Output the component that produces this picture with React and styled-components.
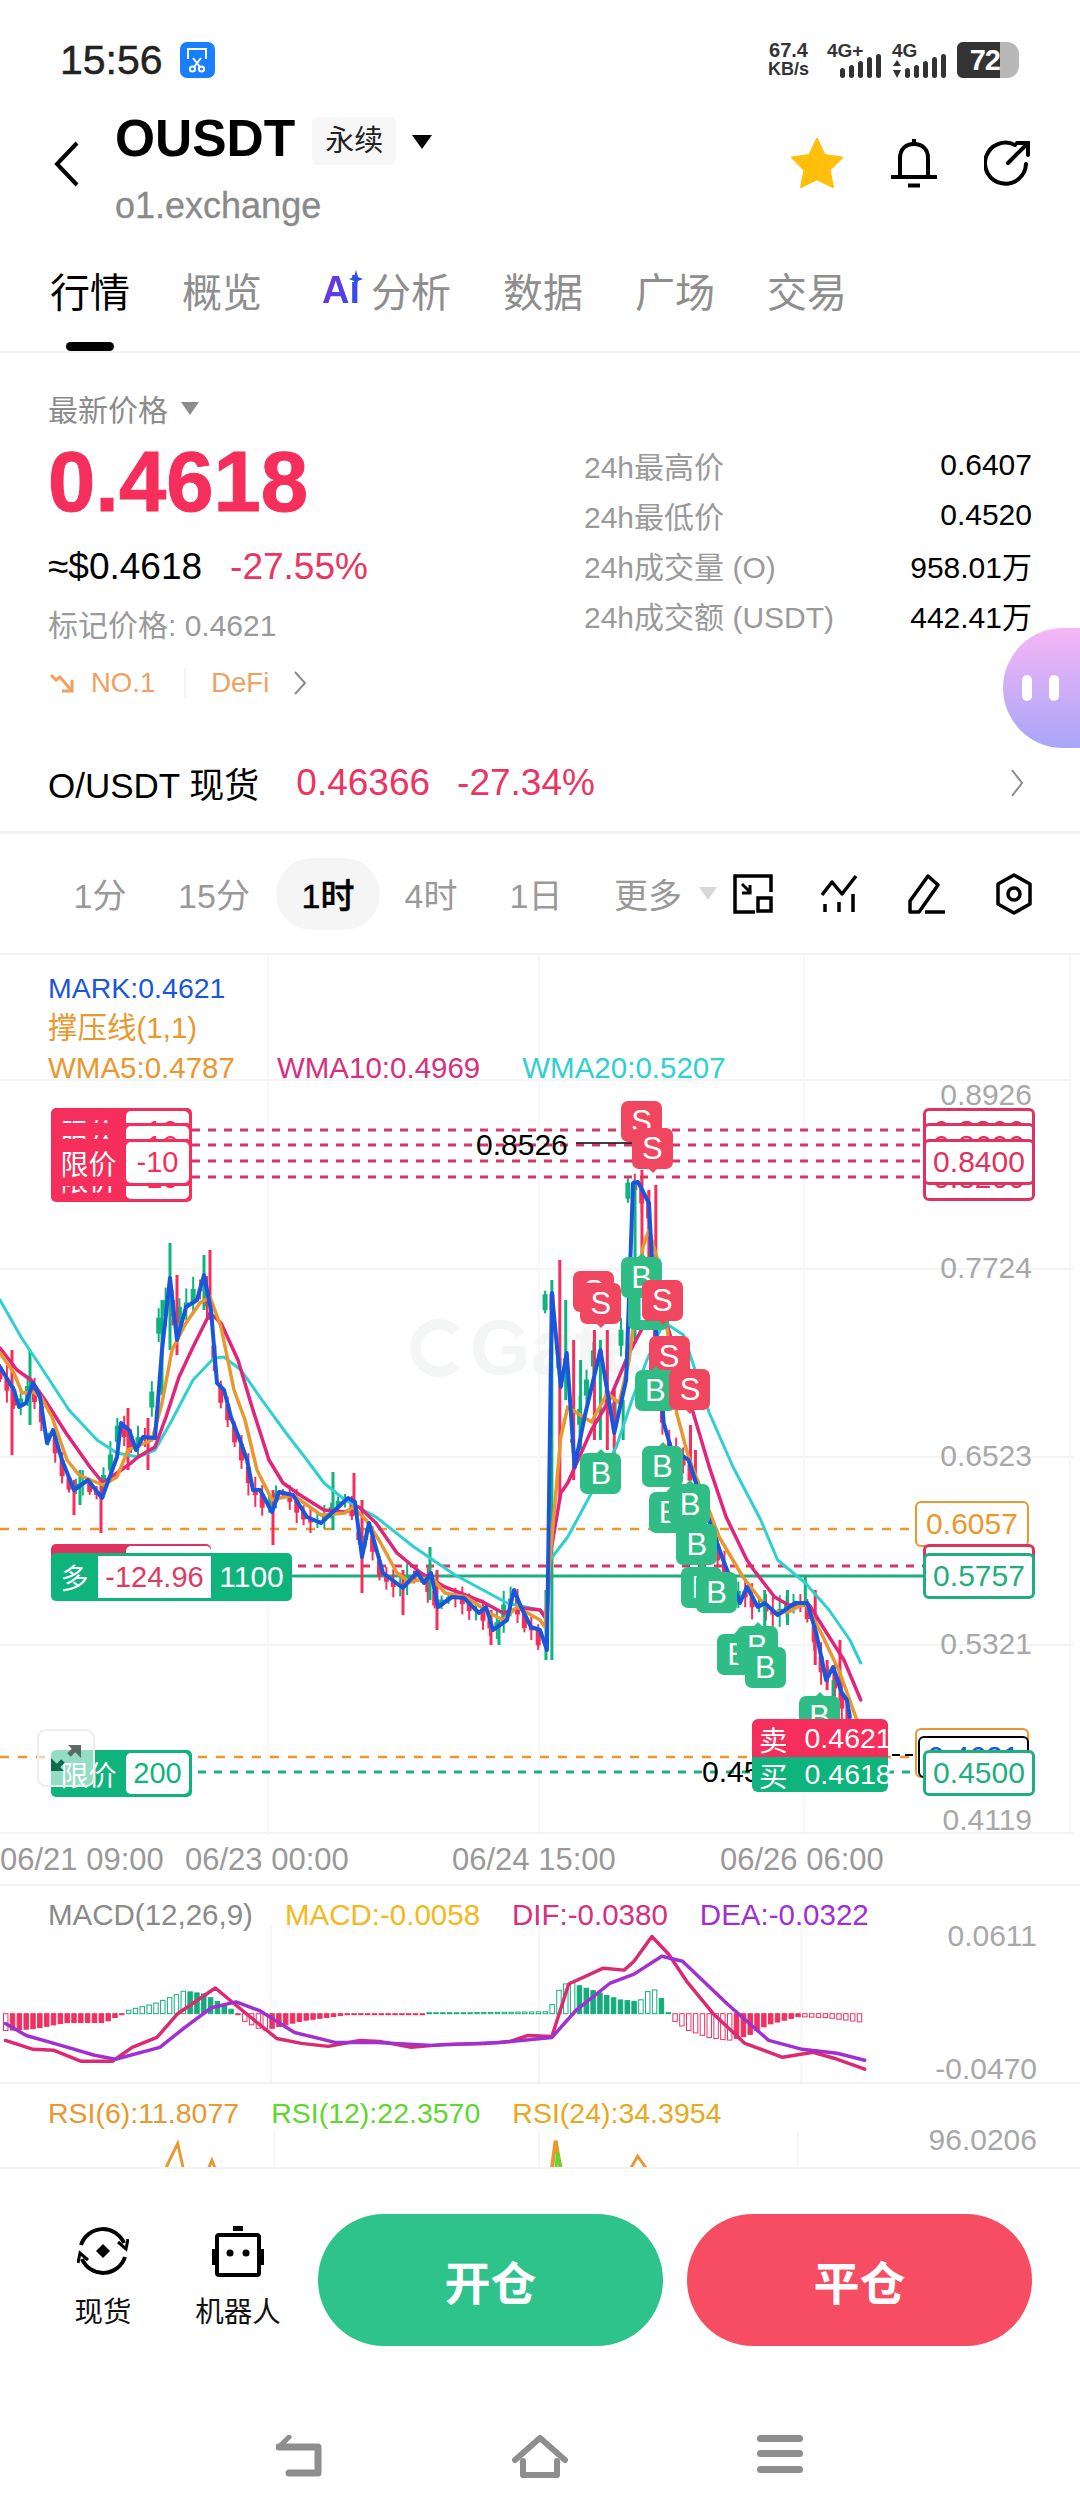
import React from "react";
import styled, { createGlobalStyle } from "styled-components";

const GlobalStyle = createGlobalStyle`
  html, body {
    margin: 0;
    padding: 0;
    background: #fff;
  }
  body {
    width: 1080px;
    height: 2520px;
    overflow: hidden;
    font-family: "Liberation Sans", "Noto Sans CJK SC", sans-serif;
  }
`;

const RED = "#f52e5b";
const GREEN = "#0fb47c";
const ORANGE = "#e8982f";
const PINK = "#d6307f";
const TEAL = "#2ed0d0";
const BLUE = "#1a56db";

// traced from the chart, page coordinates
const squeeze = (x) => (x <= 540 ? x : 540 + (x - 540) * 0.99);
const tidy = (pts) => pts.map(([x, y]) => [squeeze(x), y]);

const blue = tidy([[0,1367],[14,1390],[19,1407],[26,1403],[33,1383],[40,1397],[47,1443],[53,1430],[62,1460],[74,1490],[88,1480],[102,1498],[117,1457],[121,1423],[129,1430],[136,1450],[143,1437],[155,1438],[162,1350],[170,1278],[177,1340],[186,1307],[197,1300],[204,1275],[211,1310],[217,1383],[224,1390],[231,1417],[241,1443],[247,1460],[253,1490],[260,1490],[272,1512],[279,1492],[293,1495],[307,1517],[321,1523],[348,1498],[355,1502],[362,1557],[369,1523],[383,1573],[403,1588],[417,1572],[424,1583],[431,1573],[438,1607],[452,1597],[464,1598],[479,1613],[486,1607],[493,1630],[507,1620],[514,1590],[521,1607],[531,1627],[540,1630],[547,1650],[552,1293],[561,1387],[567,1353],[575,1467],[585,1417],[601,1350],[615,1433],[627,1380],[634,1183],[639,1182],[650,1203],[657,1327],[665,1423],[672,1447],[690,1460],[700,1490],[725,1560],[742,1603],[749,1587],[760,1607],[767,1603],[780,1615],[798,1603],[810,1603],[819,1633],[829,1680],[836,1667],[845,1693],[850,1700],[853,1717]]);
const orange = tidy([[0,1353],[14,1373],[22,1393],[33,1392],[41,1397],[52,1417],[67,1460],[79,1475],[103,1485],[117,1477],[128,1450],[152,1440],[162,1403],[172,1350],[186,1323],[200,1303],[210,1297],[221,1327],[234,1390],[245,1420],[257,1470],[272,1500],[293,1495],[321,1515],[345,1513],[353,1507],[366,1520],[379,1540],[397,1573],[410,1582],[431,1577],[445,1593],[466,1597],[490,1613],[503,1620],[517,1607],[540,1620],[545,1627],[550,1560],[561,1437],[568,1407],[592,1422],[608,1393],[620,1403],[630,1360],[644,1247],[650,1230],[658,1257],[669,1333],[678,1413],[690,1457],[704,1493],[721,1537],[745,1577],[763,1600],[777,1612],[791,1612],[808,1603],[826,1637],[843,1673],[860,1720]]);
const pink = tidy([[0,1348],[17,1370],[31,1380],[45,1400],[66,1433],[90,1467],[103,1483],[117,1473],[131,1463],[138,1457],[155,1447],[166,1417],[179,1377],[193,1347],[210,1313],[221,1323],[238,1360],[252,1407],[269,1460],[283,1483],[300,1495],[324,1510],[345,1512],[359,1507],[376,1523],[397,1553],[421,1573],[445,1587],[483,1602],[503,1613],[521,1608],[540,1610],[547,1620],[550,1557],[561,1493],[568,1483],[592,1430],[610,1400],[630,1353],[644,1327],[669,1327],[693,1407],[711,1467],[728,1517],[749,1560],[756,1570],[777,1597],[791,1605],[812,1605],[829,1632],[847,1660],[864,1700]]);
const teal = tidy([[0,1300],[21,1337],[41,1367],[69,1410],[97,1440],[117,1453],[138,1457],[155,1450],[172,1420],[193,1380],[214,1358],[224,1357],[241,1370],[262,1400],[286,1433],[307,1460],[324,1483],[345,1500],[376,1517],[414,1547],[455,1575],[483,1590],[507,1603],[540,1610],[547,1615],[550,1560],[568,1537],[592,1493],[617,1447],[634,1397],[648,1360],[665,1322],[685,1335],[711,1413],[735,1467],[763,1520],[780,1560],[808,1583],[832,1610],[853,1640],[864,1663]]);
const dif = [[0,2040],[28,2049],[49,2050],[76,2061],[108,2061],[128,2047],[153,2037],[174,2013],[212,1987],[236,2007],[274,2038],[299,2043],[326,2046],[358,2040],[378,2041],[410,2047],[444,2044],[486,2043],[510,2041],[528,2035],[552,2036],[569,1983],[604,1967],[625,1969],[635,1960],[653,1935],[670,1953],[688,1980],[715,2013],[747,2043],[785,2057],[816,2052],[837,2058],[868,2069]];
const dea = [[0,2023],[21,2035],[56,2045],[90,2055],[111,2059],[156,2047],[181,2027],[208,2007],[233,2001],[257,2010],[292,2032],[333,2042],[375,2042],[431,2045],[500,2042],[552,2037],[576,2010],[611,1982],[635,1973],[663,1955],[684,1960],[729,2003],[771,2040],[805,2049],[840,2053],[868,2060]];
const macdShape = [[0,17],[30,15],[60,9],[100,9],[112,3],[118,0],[125,-4],[150,-10],[170,-18],[180,-23],[200,-20],[220,-9],[232,-2],[240,7],[260,17],[280,12],[300,7],[345,1],[400,0.6],[470,-1],[550,-2],[555,-20],[570,-34],[580,-28],[600,-21],[620,-14],[640,-12],[650,-24],[660,-24],[665,-6],[670,0],[675,7],[690,17],[710,24],[730,27],[750,22],[770,11],[800,3],[830,4],[868,9]];

// x, wick top, wick bottom, colour
const bigWicks = [[12,1350,1455,RED],[30,1350,1425,GREEN],[128,1408,1470,RED],[148,1418,1470,RED],[74,1480,1515,RED],[80,1470,1505,GREEN],[101,1480,1533,RED],[170,1243,1350,GREEN],[177,1275,1355,RED],[162,1300,1395,GREEN],[204,1255,1310,GREEN],[210,1250,1320,RED],[273,1490,1545,RED],[333,1472,1530,GREEN],[354,1473,1515,RED],[362,1500,1593,RED],[403,1570,1615,RED],[430,1547,1600,GREEN],[437,1570,1630,RED],[491,1610,1645,RED],[499,1620,1645,GREEN],[546,1590,1660,GREEN],[552,1280,1660,GREEN],[560,1260,1500,RED],[566,1300,1400,GREEN],[574,1340,1480,RED],[581,1360,1450,GREEN],[595,1330,1440,RED],[601,1340,1440,GREEN],[608,1330,1450,RED],[615,1390,1460,RED],[624,1400,1440,GREEN],[636,1180,1340,GREEN],[643,1170,1290,RED],[650,1190,1260,RED],[657,1185,1300,RED],[692,1425,1480,RED],[697,1450,1500,RED],[767,1590,1630,GREEN],[790,1590,1625,GREEN],[808,1575,1605,GREEN],[818,1590,1665,RED],[830,1660,1690,RED],[843,1640,1700,RED],[836,1680,1700,GREEN],[850,1700,1720,RED]];

const toPoints = (pts) => pts.map((p) => p.join(",")).join(" ");

const interpolate = (pts, x) => {
  for (let i = 1; i < pts.length; i++) {
    if (x <= pts[i][0]) {
      const [x0, y0] = pts[i - 1];
      const [x1, y1] = pts[i];
      return y0 + ((y1 - y0) * (x - x0)) / (x1 - x0 || 1);
    }
  }
  return pts[pts.length - 1][1];
};

const buildCandles = () => {
  const list = [];
  for (let i = 0; i * 6.9 < 850; i++) {
    const x = i * 6.9;
    const a = interpolate(blue, x);
    const b = interpolate(blue, x + 6.9);
    const seed = Math.abs(Math.sin(i * 12.9898) * 43758.5453) % 1;
    const wick = 3 + seed * 11;
    const top = Math.min(a, b);
    const bottom = Math.max(a, b);
    // the body stays short on the steep legs, the overlay line covers the move
    const body = Math.min(bottom - top + 1, 16);
    list.push({
      x,
      top,
      body,
      high: top - wick,
      low: top + body + wick * 0.9,
      color: b > a ? RED : GREEN,
    });
  }
  return list;
};

const buildMacd = () => {
  const list = [];
  let prev = 0;
  for (let x = 0; x < 868; x += 6.9) {
    const value = interpolate(macdShape, x);
    // bars that are still growing are drawn hollow
    list.push({ x, value, hollow: Math.abs(value) > Math.abs(prev) });
    prev = value;
  }
  return list;
};

const candles = buildCandles();
const macdBars = buildMacd();

const Page = styled.div`
  position: relative;
  width: 1080px;
  height: 2520px;
  overflow: hidden;
  background: #fff;
  color: #000;
`;

/* status bar */
const StatusBar = styled.div`
  display: flex;
  align-items: center;
  justify-content: space-between;
  height: 100px;
  box-sizing: border-box;
  padding: 20px 61px 0 60px;
`;
const StatusLeft = styled.div`
  display: flex;
  align-items: center;
  gap: 17px;
`;
const Clock = styled.span`
  font-size: 41px;
  font-weight: 500;
  color: #222;
  -webkit-text-stroke: 0.5px #222;
`;
const ScissorBadge = styled.div`
  display: flex;
  align-items: center;
  justify-content: center;
  width: 35px;
  height: 36px;
  border-radius: 7px;
  background: #1a7fff;
`;
const StatusRight = styled.div`
  display: flex;
  align-items: center;
  gap: 11px;
`;
const NetSpeed = styled.div`
  display: flex;
  flex-direction: column;
  align-items: center;
  width: 43px;
  margin-right: 6px;
  font-weight: 700;
  color: #333;
`;
const NetValue = styled.span`
  font-size: ${(p) => p.$size}px;
  line-height: 19px;
`;
const NetCell = styled.div`
  position: relative;
  width: 54px;
  height: 36px;
`;
const NetLabel = styled.span`
  position: absolute;
  left: 0;
  top: 0;
  font-size: 19px;
  line-height: 18px;
  font-weight: 700;
  color: #333;
`;
const NetBars = styled.svg`
  position: absolute;
  left: ${(p) => p.$left}px;
  top: 12px;
`;
const Battery = styled.div`
  display: flex;
  align-items: center;
  width: 62px;
  height: 36px;
  border-radius: 6px 12px 12px 6px;
  background: #b8b8b8;
  overflow: hidden;
`;
const BatteryFill = styled.div`
  display: flex;
  align-items: center;
  justify-content: flex-end;
  width: 43px;
  height: 100%;
  box-sizing: border-box;
  background: #333;
  color: #fff;
  font-size: 29px;
  font-weight: 700;
  letter-spacing: -1px;
`;

/* header */
const Header = styled.div`
  display: flex;
  align-items: flex-start;
  height: 160px;
  padding: 0 50px 0 53px;
  box-sizing: border-box;
`;
const BackButton = styled.svg`
  width: 26px;
  height: 46px;
  margin-top: 41px;
  margin-right: 36px;
`;
const TitleColumn = styled.div`
  display: flex;
  flex-direction: column;
  flex: 1;
  padding-top: 8px;
`;
const TitleRow = styled.div`
  display: flex;
  align-items: flex-start;
  height: 60px;
`;
const Symbol = styled.span`
  font-size: 51.5px;
  line-height: 60px;
  font-weight: 700;
`;
const ContractTag = styled.span`
  width: 84px;
  height: 48px;
  margin: 9px 0 0 17px;
  border-radius: 6px;
  background: #f7f7f7;
  color: #222;
  font-size: 29px;
  line-height: 48px;
  text-align: center;
`;
const TitleCaret = styled.span`
  width: 0;
  height: 0;
  margin: 27px 0 0 16px;
  border-left: 10px solid transparent;
  border-right: 10px solid transparent;
  border-top: 14px solid #000;
`;
const Exchange = styled.div`
  margin-top: 16px;
  font-size: 36px;
  line-height: 44px;
  color: #8a8a8a;
  -webkit-text-stroke: 0.3px #8a8a8a;
`;
const HeaderActions = styled.div`
  display: flex;
  align-items: center;
  gap: 47px;
  padding-top: 38px;
`;

/* tabs */
const TabBar = styled.div`
  display: flex;
  align-items: flex-start;
  gap: 52px;
  height: 93px;
  padding: 6px 0 0 50px;
  box-sizing: border-box;
  border-bottom: 2px solid #f2f2f2;
`;
const Tab = styled.div`
  position: relative;
  display: flex;
  align-items: center;
  height: 48px;
  margin-left: ${(p) => (p.$ai ? 8 : 0)}px;
  font-size: 40px;
  color: ${(p) => (p.$active ? "#000" : "#8e8e8e")};

  &::after {
    content: "";
    display: ${(p) => (p.$active ? "block" : "none")};
    position: absolute;
    left: 16px;
    top: 76px;
    width: 48px;
    height: 9px;
    border-radius: 5px;
    background: #000;
  }
`;
const AiMark = styled.span`
  width: 36px;
  font-size: 38px;
  font-weight: 700;
  background: linear-gradient(100deg, #7a2fe0, #2d50ea);
  -webkit-background-clip: text;
  background-clip: text;
  color: transparent;
`;
const AiSpark = styled.svg`
  margin: -22px 8px 0 -9px;
`;

/* price block */
const InfoBlock = styled.div`
  position: relative;
  display: flex;
  justify-content: space-between;
  height: 381px;
  padding: 0 48px;
`;
const InfoLeft = styled.div`
  display: flex;
  flex-direction: column;
  padding-top: 35px;
`;
const PriceLabel = styled.div`
  display: flex;
  align-items: center;
  gap: 13px;
  height: 40px;
  font-size: 30px;
  color: #8c8c8c;
`;
const SmallCaret = styled.span`
  width: 0;
  height: 0;
  border-left: 9px solid transparent;
  border-right: 9px solid transparent;
  border-top: 13px solid ${(p) => p.$color || "#8c8c8c"};
`;
const LastPrice = styled.div`
  margin-top: 9px;
  font-size: 85px;
  line-height: 90px;
  font-weight: 700;
  color: ${RED};
  -webkit-text-stroke: 1px ${RED};
`;
const QuoteRow = styled.div`
  display: flex;
  gap: 28px;
  margin-top: 20px;
  font-size: 37px;
  line-height: 40px;
`;
const RedValue = styled.span`
  color: #ea3563;
  font-size: 37px;
`;
const MarkRow = styled.div`
  margin-top: 19px;
  font-size: 30px;
  line-height: 40px;
  color: #9a9a9a;
`;
const TagRow = styled.div`
  display: flex;
  align-items: center;
  height: 40px;
  margin-top: 17px;
  font-size: 27.5px;
  color: #f0a060;
`;
const TagDivider = styled.span`
  width: 2px;
  height: 30px;
  margin: 0 25px 0 29px;
  background: #f4f4f4;
`;
const InfoRight = styled.div`
  display: flex;
  flex-direction: column;
  width: 448px;
  padding-top: 87px;
`;
const StatRow = styled.div`
  display: flex;
  align-items: center;
  justify-content: space-between;
  height: 50px;
  font-size: 30px;
`;
const StatLabel = styled.span`
  color: #9a9a9a;
`;
const AssistantBlob = styled.div`
  position: absolute;
  right: 0;
  top: 275px;
  display: flex;
  align-items: center;
  justify-content: center;
  gap: 17px;
  width: 77px;
  height: 120px;
  padding-right: 3px;
  box-sizing: border-box;
  border-radius: 60px 0 0 60px;
  background: linear-gradient(180deg, #f5b6f5, #a8a6f8);
`;
const BlobEye = styled.span`
  width: 10px;
  height: 26px;
  border-radius: 5px;
  background: #fff;
`;
const SpotRow = styled.div`
  display: flex;
  align-items: center;
  height: 97px;
  padding: 0 56px 0 48px;
  border-bottom: 3px solid #f3f3f3;
  font-size: 35px;
`;
const SpotName = styled.span`
  margin-right: 37px;
`;
const SpotGap = styled.span`
  width: 27px;
`;
const Spacer = styled.span`
  flex: 1;
`;

/* periods */
const PeriodRow = styled.div`
  display: flex;
  align-items: center;
  height: 119px;
  padding-left: 48px;
  border-bottom: 2px solid #f3f3f3;
  font-size: 34px;
  color: #999;
`;
const Period = styled.div`
  display: flex;
  align-items: center;
  justify-content: center;
  width: ${(p) => p.$w}px;
`;
const ActivePeriod = styled.div`
  display: flex;
  align-items: center;
  justify-content: center;
  width: 104px;
  height: 72px;
  border-radius: 36px;
  background: #f5f5f5;
  color: #000;
  font-weight: 500;
  -webkit-text-stroke: 0.4px #000;
`;
const MorePeriod = styled.div`
  display: flex;
  align-items: center;
  gap: 17px;
  width: 143px;
  padding-left: 24px;
  box-sizing: border-box;
`;
const ChartTools = styled.div`
  display: flex;
  align-items: center;
  gap: 47px;
`;

/* chart panels */
const MainPanel = styled.div`
  position: relative;
  display: flex;
  flex-direction: column;
  height: 929px;
`;
const PanelSvg = styled.svg`
  position: absolute;
  left: 0;
  top: 0;
  width: 1080px;
  height: 100%;
`;
const Legend = styled.div`
  position: relative;
  display: flex;
  flex-direction: column;
  height: 125px;
  padding: 13px 0 0 48px;
  box-sizing: border-box;
  font-size: 29.5px;
  line-height: 40px;
`;
const LegendRow = styled.div`
  display: flex;
  gap: 42px;
`;
const LegendItem = styled.span`
  color: ${(p) => p.$color};
  font-size: ${(p) => (p.$size ? `${p.$size}px` : "inherit")};
`;
const Canvas = styled.div`
  position: relative;
  flex: 1;
`;
const Watermark = styled.div`
  position: absolute;
  left: 470px;
  top: 222px;
  font-size: 78px;
  line-height: 90px;
  font-weight: 700;
  color: #f4f6f6;
`;
const WatermarkRing = styled.div`
  position: absolute;
  left: 410px;
  top: 239px;
  width: 36px;
  height: 36px;
  border: 11px solid #f4f6f6;
  border-right-color: transparent;
  border-radius: 50%;
`;
const AxisValue = styled.span`
  position: absolute;
  right: 48px;
  top: ${(p) => p.$y - 20}px;
  font-size: 30px;
  line-height: 40px;
  color: #a8a8a8;
`;
const SignalMark = styled.div`
  position: absolute;
  left: ${(p) => p.$x - 21}px;
  top: ${(p) => p.$y - 1080 - 21}px;
  width: 41px;
  height: 41px;
  border-radius: 7px;
  background: ${(p) => (p.$kind === "S" ? "#f0465f" : "#2fbd85")};
  color: #fff;
  font-size: 31px;
  line-height: 41px;
  text-align: center;

  &::after {
    content: "";
    position: absolute;
    left: 16px;
    width: 0;
    height: 0;
    border-left: 5px solid transparent;
    border-right: 5px solid transparent;
    ${(p) =>
      p.$kind === "S"
        ? `bottom: -4px; border-top: 5px solid #f0465f;`
        : `top: -4px; border-bottom: 5px solid #2fbd85;`}
  }
`;
const OrderTag = styled.div`
  position: absolute;
  left: 51px;
  top: ${(p) => p.$y - 1080}px;
  display: flex;
  align-items: center;
  width: ${(p) => p.$w || 141}px;
  height: ${(p) => p.$h || 47}px;
  box-sizing: border-box;
  border-radius: 5px;
  background: ${(p) => p.$color};
  color: #fff;
  font-size: 28px;
`;
const TagName = styled.span`
  width: ${(p) => p.$w || 75}px;
  text-align: center;
  flex: none;
`;
const TagValue = styled.span`
  display: flex;
  align-items: center;
  justify-content: center;
  width: ${(p) => p.$w || 63}px;
  height: ${(p) => p.$h || 41}px;
  flex: none;
  border-radius: ${(p) => (p.$square ? 0 : 5)}px;
  background: #fff;
  color: ${(p) => p.$color};
  font-size: 29px;
`;
const TagExtra = styled.span`
  flex: 1;
  text-align: center;
  font-size: 30px;
`;
const PriceTag = styled.div`
  position: absolute;
  left: ${(p) => p.$x}px;
  top: ${(p) => p.$y - 1080}px;
  width: ${(p) => p.$w || 112}px;
  height: ${(p) => p.$h || 46}px;
  box-sizing: border-box;
  border: ${(p) => p.$line || 3}px solid ${(p) => p.$color};
  border-radius: 6px;
  background: #fff;
  color: ${(p) => p.$text || p.$color};
  font-size: 30px;
  line-height: ${(p) => (p.$h || 46) - 2 * (p.$line || 3)}px;
  text-align: center;
`;
const LineLabel = styled.span`
  position: absolute;
  left: ${(p) => p.$x}px;
  top: ${(p) => p.$y - 1080 - 20}px;
  font-size: 30px;
  line-height: 40px;
  color: #000;
`;
const BidAsk = styled.div`
  position: absolute;
  left: 752px;
  top: ${(p) => p.$y - 1080}px;
  display: flex;
  align-items: center;
  gap: 17px;
  width: 136px;
  height: ${(p) => p.$h}px;
  padding-left: 7px;
  box-sizing: border-box;
  border-radius: ${(p) => p.$radius};
  background: ${(p) => p.$color};
  color: #fff;
  font-size: 28.5px;
`;
const ExpandButton = styled.div`
  position: absolute;
  left: 37px;
  top: 649px;
  display: flex;
  align-items: center;
  justify-content: center;
  width: 58px;
  height: 58px;
  box-sizing: border-box;
  border: 2px solid #eeeeee;
  border-radius: 9px;
  background: rgba(255, 255, 255, 0.55);
`;
const TimeAxis = styled.div`
  position: relative;
  display: flex;
  height: 51px;
  align-items: flex-end;
  font-size: 31px;
  line-height: 42px;
  color: #999;
  padding-bottom: 3px;
  box-sizing: border-box;
`;
const TimeLabel = styled.span`
  width: ${(p) => p.$w}px;
  flex: none;
`;
const SubPanel = styled.div`
  position: relative;
  height: ${(p) => p.$h}px;
  border-top: 2px solid #f2f2f2;
  box-sizing: border-box;
  overflow: hidden;
`;
const SubLegend = styled.div`
  position: relative;
  display: flex;
  gap: ${(p) => p.$gap}px;
  padding: 9px 0 0 48px;
  font-size: ${(p) => p.$size}px;
  line-height: 40px;
`;
const SubAxis = styled.span`
  position: absolute;
  right: 43px;
  top: ${(p) => p.$y}px;
  font-size: 30px;
  line-height: 40px;
  color: #a8a8a8;
`;

/* bottom */
const TradeBar = styled.div`
  display: flex;
  align-items: flex-start;
  height: 233px;
  padding: 45px 0 0 53px;
  box-sizing: border-box;
  border-top: 2px solid #f3f3f3;
`;
const ShortcutRow = styled.div`
  display: flex;
  gap: 35px;
  margin-right: 30px;
`;
const Shortcut = styled.div`
  display: flex;
  flex-direction: column;
  align-items: center;
  width: 100px;
  padding-top: 11px;
  font-size: 28.5px;
  line-height: 40px;
  color: #111;
`;
const ShortcutIcon = styled.svg`
  width: 52px;
  height: 52px;
  margin-bottom: 15px;
`;
const ActionButton = styled.div`
  display: flex;
  align-items: center;
  justify-content: center;
  width: 345px;
  height: 132px;
  margin-right: 24px;
  border-radius: 66px;
  background: ${(p) => p.$color};
  color: #fff;
  font-size: 46px;
  font-weight: 700;
`;
const NavBar = styled.div`
  display: flex;
  justify-content: center;
  padding-top: 35px;
`;
const NavItem = styled.div`
  display: flex;
  justify-content: center;
  width: 240px;
`;

const SignalBars = () => (
  <>
    {[[0, 14], [9, 11], [18, 7], [27, 3], [36, 0]].map(([x, y]) => (
      <rect key={x} x={x} y={y} width="5" height={24 - y} rx="2.5" fill="#333" />
    ))}
  </>
);

const Star = () => (
  <svg width="54" height="50" viewBox="0 0 54 50">
    <path
      d="M27 1 L34.5 17 L52 19.5 L39.5 32 L43 49 L27 41 L11 49 L14.5 32 L2 19.5 L19.5 17 Z"
      fill="#ffbf0b"
      stroke="#ffbf0b"
      strokeWidth="2"
      strokeLinejoin="round"
    />
  </svg>
);

const Bell = () => (
  <svg width="46" height="50" viewBox="0 0 46 50" fill="none" stroke="#000" strokeWidth="4">
    <path d="M9 39 V20 C9 11 15 6 23 6 C31 6 37 11 37 20 V39" />
    <path d="M1 39 H45" strokeLinecap="round" />
    <path d="M23 1 V6" />
    <path d="M17 47.5 H29" strokeWidth="4" />
  </svg>
);

const Share = () => (
  <svg width="46" height="46" viewBox="0 0 46 46" fill="none" stroke="#000" strokeWidth="4" strokeLinecap="round">
    <path d="M31 5 A 20.5 20.5 0 1 0 42 24" />
    <path d="M24 23 L43 4" />
    <path d="M33 3 H44 V15" />
  </svg>
);

const RatioTool = () => (
  <svg width="40" height="40" viewBox="0 0 40 40" fill="none" stroke="#000" strokeWidth="3.5">
    <path d="M22 38 H2 V2 H38 V18" />
    <path d="M9 10 L18 19 M17 11 V19 H9" strokeWidth="3" />
    <rect x="25" y="24" width="13" height="13" />
  </svg>
);

const IndicatorTool = () => (
  <svg width="40" height="40" viewBox="0 0 40 40" fill="none" stroke="#000" strokeWidth="3.5" strokeLinejoin="round">
    <path d="M2 21 L12 8 L22 20 L36 2" />
    <path d="M5 30 V38 M19 28 V38 M33 20 V38" />
  </svg>
);

const PenTool = () => (
  <svg width="40" height="42" viewBox="0 0 40 42" fill="none" stroke="#000" strokeWidth="3.5" strokeLinejoin="round">
    <path d="M3 39 V28 L21 3 L31 12 L12 39 Z" />
    <path d="M18 39 H38" />
  </svg>
);

const GearTool = () => (
  <svg width="40" height="42" viewBox="0 0 40 42" fill="none" stroke="#000" strokeWidth="3.5" strokeLinejoin="round">
    <path d="M20 2 L36 11 V31 L20 40 L4 31 V11 Z" />
    <circle cx="20" cy="21" r="6" />
  </svg>
);

const Overlay = ({ color, pts, width = 3.5 }) => (
  <polyline
    points={toPoints(pts)}
    fill="none"
    stroke={color}
    strokeWidth={width}
    strokeLinejoin="round"
    strokeLinecap="round"
  />
);

const signals = [
  ["S", 643, 1122], ["S", 654, 1149], ["B", 643, 1278], ["S", 595, 1292], ["S", 602, 1304],
  ["B", 650, 1310], ["S", 664, 1301], ["S", 671, 1357], ["B", 657, 1391], ["S", 692, 1390],
  ["B", 602, 1474], ["B", 664, 1467], ["B", 671, 1513], ["B", 692, 1505], ["B", 699, 1545],
  ["B", 704, 1588], ["B", 719, 1593], ["B", 740, 1655], ["B", 760, 1647], ["B", 768, 1668],
  ["B", 823, 1717],
];

const gridY = [1080, 1269, 1457, 1645, 1833];
const gridX = [268, 539, 804, 1070];

const stats = [
  ["24h最高价", "0.6407"],
  ["24h最低价", "0.4520"],
  ["24h成交量 (O)", "958.01万"],
  ["24h成交额 (USDT)", "442.41万"],
];

export default function App() {
  return (
    <Page>
      <GlobalStyle />
      <StatusBar>
        <StatusLeft>
          <Clock>15:56</Clock>
          <ScissorBadge>
            <svg width="24" height="26" viewBox="0 0 24 26" fill="none" stroke="#fff" strokeWidth="2">
              <path d="M3 12 V2 H21 V12" />
              <path d="M8 11 L15 20 M16 11 L9 20" />
              <circle cx="7.5" cy="22" r="2.6" />
              <circle cx="16.5" cy="22" r="2.6" />
            </svg>
          </ScissorBadge>
        </StatusLeft>
        <StatusRight>
          <NetSpeed>
            <NetValue $size={20}>67.4</NetValue>
            <NetValue $size={18}>KB/s</NetValue>
          </NetSpeed>
          <NetCell>
            <NetLabel>4G+</NetLabel>
            <NetBars $left={13} width="41" height="24" viewBox="0 0 41 24">
              <SignalBars />
            </NetBars>
          </NetCell>
          <NetCell>
            <NetLabel>4G</NetLabel>
            <NetBars $left={0} width="54" height="24" viewBox="0 0 54 24">
              <path d="M5 6 L9 12 H1 Z M5 24 L1 16 H9 Z" fill="#333" />
              <g transform="translate(13 0)">
                <SignalBars />
              </g>
            </NetBars>
          </NetCell>
          <Battery>
            <BatteryFill>72</BatteryFill>
          </Battery>
        </StatusRight>
      </StatusBar>

      <Header>
        <BackButton viewBox="0 0 26 46" fill="none" stroke="#000" strokeWidth="4">
          <path d="M24 2 L4 23 L24 44" />
        </BackButton>
        <TitleColumn>
          <TitleRow>
            <Symbol>OUSDT</Symbol>
            <ContractTag>永续</ContractTag>
            <TitleCaret />
          </TitleRow>
          <Exchange>o1.exchange</Exchange>
        </TitleColumn>
        <HeaderActions>
          <Star />
          <Bell />
          <Share />
        </HeaderActions>
      </Header>

      <TabBar>
        <Tab $active>行情</Tab>
        <Tab>概览</Tab>
        <Tab $ai>
          <AiMark>Ai</AiMark>
          <AiSpark width="14" height="18" viewBox="0 0 14 18">
            <path d="M7 0 L9 7 L14 9 L9 11 L7 18 L5 11 L0 9 L5 7 Z" fill="#2d50ea" />
          </AiSpark>
          分析
        </Tab>
        <Tab>数据</Tab>
        <Tab>广场</Tab>
        <Tab>交易</Tab>
      </TabBar>

      <InfoBlock>
        <InfoLeft>
          <PriceLabel>
            最新价格
            <SmallCaret />
          </PriceLabel>
          <LastPrice>0.4618</LastPrice>
          <QuoteRow>
            <span>≈$0.4618</span>
            <RedValue>-27.55%</RedValue>
          </QuoteRow>
          <MarkRow>标记价格: 0.4621</MarkRow>
          <TagRow>
            <svg width="28" height="26" viewBox="0 0 28 26" fill="none" stroke="#f0a060" strokeWidth="3" style={{ marginRight: 13, marginLeft: 2 }}>
              <path d="M1 5 L6 10 L10 7 L21 20" />
              <path d="M22 10 V21 H12" />
            </svg>
            <span>NO.1</span>
            <TagDivider />
            <span>DeFi</span>
            <svg width="14" height="26" viewBox="0 0 14 26" fill="none" stroke="#8c8c8c" strokeWidth="2" style={{ marginLeft: 24 }}>
              <path d="M2 2 L12 13 L2 24" />
            </svg>
          </TagRow>
        </InfoLeft>
        <InfoRight>
          {stats.map(([label, value]) => (
            <StatRow key={label}>
              <StatLabel>{label}</StatLabel>
              <span>{value}</span>
            </StatRow>
          ))}
        </InfoRight>
        <AssistantBlob>
          <BlobEye />
          <BlobEye />
        </AssistantBlob>
      </InfoBlock>

      <SpotRow>
        <SpotName>O/USDT 现货</SpotName>
        <RedValue>0.46366</RedValue>
        <SpotGap />
        <RedValue>-27.34%</RedValue>
        <Spacer />
        <svg width="14" height="30" viewBox="0 0 14 30" fill="none" stroke="#8c8c8c" strokeWidth="2">
          <path d="M2 2 L12 15 L2 28" />
        </svg>
      </SpotRow>

      <PeriodRow>
        <Period $w={104}>1分</Period>
        <Period $w={124}>15分</Period>
        <ActivePeriod>1时</ActivePeriod>
        <Period $w={102}>4时</Period>
        <Period $w={108}>1日</Period>
        <MorePeriod>
          更多
          <SmallCaret $color="#d8d8d8" />
        </MorePeriod>
        <ChartTools>
          <RatioTool />
          <IndicatorTool />
          <PenTool />
          <GearTool />
        </ChartTools>
      </PeriodRow>

      <MainPanel>
        <PanelSvg viewBox="0 955 1080 929">
          {gridY.map((y) => (
            <line key={y} x1="0" x2="1073" y1={y} y2={y} stroke="#f4f4f4" strokeWidth="2" />
          ))}
          {gridX.map((x) => (
            <line key={x} x1={x} x2={x} y1="955" y2="1835" stroke="#f7f7f7" strokeWidth="2" />
          ))}
        </PanelSvg>
        <Legend>
          <LegendItem $color={BLUE} $size={28.5}>MARK:0.4621</LegendItem>
          <LegendItem $color={ORANGE}>撑压线(1,1)</LegendItem>
          <LegendRow>
            <LegendItem $color={ORANGE}>WMA5:0.4787</LegendItem>
            <LegendItem $color={PINK}>WMA10:0.4969</LegendItem>
            <LegendItem $color={TEAL}>WMA20:0.5207</LegendItem>
          </LegendRow>
        </Legend>
        <Canvas>
          <WatermarkRing />
          <Watermark>Gate</Watermark>
          <AxisValue $y={15}>0.8926</AxisValue>
          <AxisValue $y={188}>0.7724</AxisValue>
          <AxisValue $y={376}>0.6523</AxisValue>
          <AxisValue $y={564}>0.5321</AxisValue>
          <AxisValue $y={740}>0.4119</AxisValue>
          <PanelSvg viewBox="0 1080 1080 753">
            <g>
              {[1130, 1145, 1161, 1177].map((y) => (
                <line key={y} x1="192" x2="923" y1={y} y2={y} stroke="#d4386a" strokeWidth="3" strokeDasharray="8 8" />
              ))}
              <line x1="0" x2="915" y1="1529" y2="1529" stroke={ORANGE} strokeWidth="2.5" strokeDasharray="9 9" />
              <line x1="298" x2="923" y1="1566" y2="1566" stroke="#d4386a" strokeWidth="3" strokeDasharray="8 8" />
              <line x1="292" x2="923" y1="1576" y2="1576" stroke="#1fae80" strokeWidth="3" />
              <line x1="0" x2="915" y1="1757" y2="1757" stroke={ORANGE} strokeWidth="2.5" strokeDasharray="9 9" />
              <line x1="198" x2="923" y1="1772" y2="1772" stroke="#1fae80" strokeWidth="3" strokeDasharray="8 8" />
              <line x1="576" x2="635" y1="1143" y2="1143" stroke="#000" strokeWidth="1.5" />
              <line x1="892" x2="914" y1="1755" y2="1755" stroke="#000" strokeWidth="2" strokeDasharray="8 5" />
            </g>
            {candles.map((c) => (
              <g key={c.x} fill={c.color}>
                <rect x={c.x - 1} y={c.high} width="2" height={c.low - c.high} />
                <rect x={c.x - 2.5} y={c.top} width="5" height={c.body} />
              </g>
            ))}
            {bigWicks.map(([x, y1, y2, color]) => (
              <rect key={`${x}-${y1}`} x={squeeze(x) - 1.5} y={y1} width="3" height={y2 - y1} fill={color} />
            ))}
            <Overlay color={TEAL} pts={teal} width={3} />
            <Overlay color="#e0257a" pts={pink} />
            <Overlay color={ORANGE} pts={orange} />
            <Overlay color={BLUE} pts={blue} width={4} />
          </PanelSvg>
          <OrderTag $y={1108} $color={RED}>
            <TagName>限价</TagName>
            <TagValue $color={RED}>-10</TagValue>
          </OrderTag>
          <OrderTag $y={1123} $color={RED}>
            <TagName>限价</TagName>
            <TagValue $color={RED}>-10</TagValue>
          </OrderTag>
          <OrderTag $y={1155} $color={RED}>
            <TagName>限价</TagName>
            <TagValue $color={RED}>-10</TagValue>
          </OrderTag>
          <OrderTag $y={1139} $color={RED}>
            <TagName>限价</TagName>
            <TagValue $color={RED}>-10</TagValue>
          </OrderTag>
          <PriceTag $x={923} $y={1108} $color="#e0325f">0.8800</PriceTag>
          <PriceTag $x={923} $y={1123} $color="#e0325f">0.8600</PriceTag>
          <PriceTag $x={923} $y={1155} $color="#e0325f">0.8200</PriceTag>
          <PriceTag $x={923} $y={1139} $color="#e0325f">0.8400</PriceTag>
          <LineLabel $x={476} $y={1145}>0.8526</LineLabel>

          <PriceTag $x={915} $y={1501} $w={114} $line={2} $color={ORANGE}>0.6057</PriceTag>
          <OrderTag $y={1544} $w={160} $h={45} $color="#e0325f">
            <TagName>多</TagName>
            <TagValue $w={85} $h={41} $color={RED}>1100</TagValue>
          </OrderTag>
          <PriceTag $x={923} $y={1544} $color="#e0325f">0.5800</PriceTag>
          <OrderTag $y={1553} $w={241} $h={48} $color={GREEN}>
            <TagName $w={47}>多</TagName>
            <TagValue $w={113} $h={42} $square $color="#de3a63">-124.96</TagValue>
            <TagExtra>1100</TagExtra>
          </OrderTag>
          <PriceTag $x={923} $y={1553} $color="#1fae80">0.5757</PriceTag>

          <PriceTag $x={915} $y={1728} $w={114} $h={50} $line={2} $color={ORANGE} />
          <PriceTag $x={918} $y={1736} $w={111} $h={42} $line={2} $color="#000" $text={BLUE}>0.4621</PriceTag>
          <OrderTag $y={1750} $color={GREEN}>
            <TagName>限价</TagName>
            <TagValue $color={GREEN}>200</TagValue>
          </OrderTag>
          <LineLabel $x={702} $y={1772}>0.4500</LineLabel>
          <PriceTag $x={923} $y={1750} $color="#1fae80">0.4500</PriceTag>

          {signals.map(([kind, x, y]) => (
            <SignalMark key={`${kind}-${x}-${y}`} $kind={kind} $x={squeeze(x)} $y={y}>
              {kind}
            </SignalMark>
          ))}

          <BidAsk $y={1719} $h={38} $radius="6px 6px 0 0" $color={RED}>
            <span>卖</span>
            <span>0.4621</span>
          </BidAsk>
          <BidAsk $y={1757} $h={35} $radius="0 0 6px 6px" $color={GREEN}>
            <span>买</span>
            <span>0.4618</span>
          </BidAsk>
          <ExpandButton>
            <svg width="32" height="32" viewBox="0 0 32 32" fill="none" strokeWidth="5">
              <path d="M19 13 L27 5" stroke="#5a6a64" />
              <path d="M18 3 H31 V16 Z" fill="#5a6a64" />
              <path d="M13 19 L5 27" stroke="#0d6a4c" />
              <path d="M14 29 H1 V16 Z" fill="#0d6a4c" />
            </svg>
          </ExpandButton>
        </Canvas>
        <TimeAxis>
          <TimeLabel $w={185}>06/21 09:00</TimeLabel>
          <TimeLabel $w={267}>06/23 00:00</TimeLabel>
          <TimeLabel $w={268}>06/24 15:00</TimeLabel>
          <TimeLabel $w={200}>06/26 06:00</TimeLabel>
        </TimeAxis>
      </MainPanel>

      <SubPanel $h={198}>
        <PanelSvg viewBox="0 1884 1080 198">
          {gridX.slice(0, 3).map((x) => (
            <line key={x} x1={x} x2={x} y1="1925" y2="2082" stroke="#f6f6f6" strokeWidth="2" />
          ))}
          {macdBars.map((b) => {
            const color = b.value > 0 ? "#f0305f" : "#12ad7a";
            const h = Math.max(Math.abs(b.value), 1);
            const y = b.value > 0 ? 2013 : 2013 - h;
            return (
              <rect
                key={b.x}
                x={b.x - 2}
                y={y}
                width="4.5"
                height={h}
                fill={b.hollow ? "#fff" : color}
                stroke={color}
                strokeWidth="1"
              />
            );
          })}
          <Overlay color="#dc2a72" pts={dif} />
          <Overlay color="#a030d0" pts={dea} />
        </PanelSvg>
        <SubLegend $size={29.5} $gap={32}>
          <LegendItem $color="#8a8a8a">MACD(12,26,9)</LegendItem>
          <LegendItem $color="#f5b820">MACD:-0.0058</LegendItem>
          <LegendItem $color={PINK}>DIF:-0.0380</LegendItem>
          <LegendItem $color="#a030d0">DEA:-0.0322</LegendItem>
        </SubLegend>
        <SubAxis $y={30}>0.0611</SubAxis>
        <SubAxis $y={163}>-0.0470</SubAxis>
      </SubPanel>

      <SubPanel $h={85}>
        <PanelSvg viewBox="0 2082 1080 85">
          {gridX.slice(0, 3).map((x) => (
            <line key={x} x1={x} x2={x} y1="2130" y2="2167" stroke="#f6f6f6" strokeWidth="2" />
          ))}
          <polyline points="156,2170 163,2155 169,2143 175,2170" fill="none" stroke={ORANGE} strokeWidth="3" />
          <polyline points="200,2170 204,2160 208,2170" fill="none" stroke={ORANGE} strokeWidth="3" />
          <polyline points="552,2170 556,2140 561,2170" fill="none" stroke={ORANGE} strokeWidth="4" />
          <polyline points="556,2170 558,2152 562,2170" fill="none" stroke="#5fd62f" strokeWidth="3" />
          <polyline points="632,2170 640,2156 650,2170" fill="none" stroke={ORANGE} strokeWidth="3" />
        </PanelSvg>
        <SubLegend $size={28.5} $gap={32}>
          <LegendItem $color={ORANGE}>RSI(6):11.8077</LegendItem>
          <LegendItem $color="#5fd62f">RSI(12):22.3570</LegendItem>
          <LegendItem $color="#e8a820">RSI(24):34.3954</LegendItem>
        </SubLegend>
        <SubAxis $y={36}>96.0206</SubAxis>
      </SubPanel>

      <TradeBar>
        <ShortcutRow>
          <Shortcut>
            <ShortcutIcon viewBox="0 0 52 52" fill="none" stroke="#000" strokeWidth="4">
              <path d="M4 20 A 23 23 0 0 1 47 18" />
              <path d="M48 32 A 23 23 0 0 1 5 34" />
              <path d="M41 17 L49 24 L51 14" strokeWidth="3" />
              <path d="M11 35 L3 28 L1 38" strokeWidth="3" />
              <path d="M26 19 L33 26 L26 33 L19 26 Z" fill="#000" stroke="none" />
            </ShortcutIcon>
            现货
          </Shortcut>
          <Shortcut>
            <ShortcutIcon viewBox="0 0 52 52" fill="none" stroke="#000" strokeWidth="4">
              <path d="M21 1 H31 V6 H21 Z" fill="#000" stroke="none" />
              <rect x="5" y="10" width="42" height="40" rx="2" />
              <path d="M2 24 V40 M50 24 V40" strokeWidth="4" />
              <circle cx="18" cy="28" r="3.5" fill="#000" stroke="none" />
              <circle cx="34" cy="28" r="3.5" fill="#000" stroke="none" />
            </ShortcutIcon>
            机器人
          </Shortcut>
        </ShortcutRow>
        <ActionButton $color="#2ec38a">开仓</ActionButton>
        <ActionButton $color="#f64d63">平仓</ActionButton>
      </TradeBar>

      <NavBar>
        <NavItem>
          <svg width="48" height="42" viewBox="0 0 48 42" fill="none" stroke="#8e8e8e" strokeWidth="7" strokeLinecap="round" strokeLinejoin="round">
            <path d="M3 12 H42 V38 H13" />
            <path d="M3 12 L13 2" strokeWidth="5" />
          </svg>
        </NavItem>
        <NavItem>
          <svg width="56" height="44" viewBox="0 0 56 44" fill="none" stroke="#8e8e8e" strokeWidth="6" strokeLinecap="round" strokeLinejoin="round">
            <path d="M3 25 L28 3 L53 25" />
            <path d="M11 26 V40 H45 V26" />
          </svg>
        </NavItem>
        <NavItem>
          <svg width="46" height="38" viewBox="0 0 46 38" fill="#8e8e8e">
            <rect x="0" y="0" width="46" height="7" rx="3.5" />
            <rect x="0" y="15" width="46" height="7" rx="3.5" />
            <rect x="0" y="31" width="46" height="7" rx="3.5" />
          </svg>
        </NavItem>
      </NavBar>
    </Page>
  );
}
